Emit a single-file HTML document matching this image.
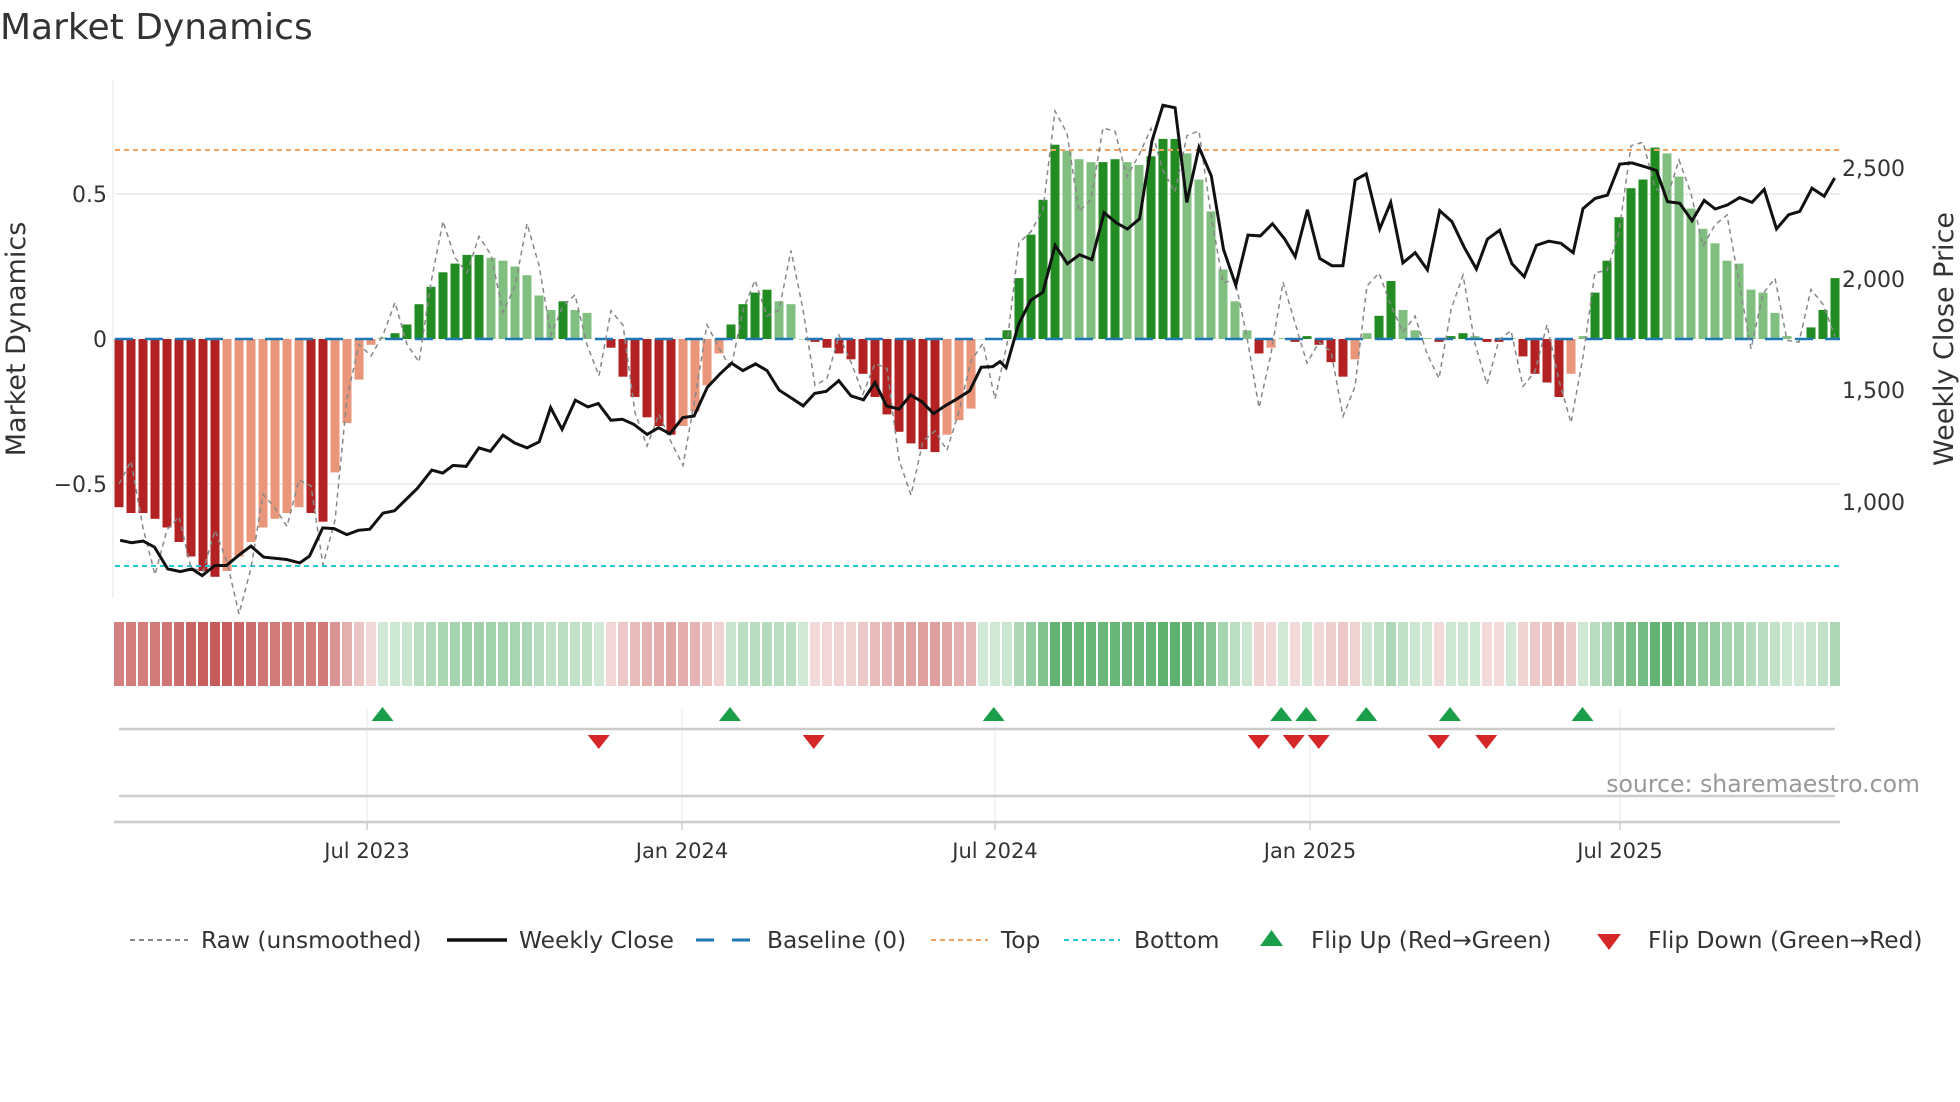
<!DOCTYPE html>
<html><head><meta charset="utf-8"><style>
html,body{margin:0;padding:0;background:#fff;width:1960px;height:1102px;overflow:hidden}
svg{display:block;font-family:"DejaVu Sans","Liberation Sans",sans-serif}
</style></head><body>
<svg id="s" width="1960" height="1102" viewBox="0 0 1960 1102" xmlns="http://www.w3.org/2000/svg">
<text x="0" y="39" font-size="36" fill="#333">Market Dynamics</text>
<line x1="113" y1="81" x2="113" y2="598" stroke="#eee" stroke-width="1.5"/>
<line x1="115" y1="194" x2="1840" y2="194" stroke="#eee" stroke-width="2"/>
<line x1="115" y1="484" x2="1840" y2="484" stroke="#eee" stroke-width="2"/>
<g font-size="22" fill="#333" text-anchor="end">
<text x="107" y="202">0.5</text><text x="107" y="347">0</text><text x="107" y="492">−0.5</text>
</g>
<text transform="translate(25,339) rotate(-90)" font-size="27" fill="#333" text-anchor="middle">Market Dynamics</text>
<g font-size="22" fill="#333">
<text x="1842" y="176">2,500</text><text x="1842" y="287">2,000</text><text x="1842" y="398">1,500</text><text x="1842" y="510">1,000</text>
</g>
<text transform="translate(1953,339) rotate(-90)" font-size="27" fill="#333" text-anchor="middle">Weekly Close Price</text>
<g id="bars"></g>
<line x1="115" y1="150" x2="1840" y2="150" stroke="#f4a460" stroke-width="2" stroke-dasharray="5,4"/>
<line x1="115" y1="566" x2="1840" y2="566" stroke="#22c8d8" stroke-width="2" stroke-dasharray="5,4"/>
<line x1="115" y1="339" x2="1840" y2="339" stroke="#1f77b4" stroke-width="2.5" stroke-dasharray="18,12"/>
<polyline id="raw" fill="none" stroke="#888" stroke-width="1.5" stroke-dasharray="5,4"/>
<polyline id="price" fill="none" stroke="#111" stroke-width="3"/>
<g id="heat"></g>
<g stroke="#eef0f2" stroke-width="1.5">
<line x1="367" y1="708" x2="367" y2="822"/><line x1="682" y1="708" x2="682" y2="822"/><line x1="995" y1="708" x2="995" y2="822"/><line x1="1310" y1="708" x2="1310" y2="822"/><line x1="1620" y1="708" x2="1620" y2="822"/>
</g>
<line x1="119" y1="729" x2="1835" y2="729" stroke="#ccc" stroke-width="2.5"/>
<line x1="119" y1="796" x2="1835" y2="796" stroke="#ccc" stroke-width="2.5"/>
<line x1="114" y1="822" x2="1840" y2="822" stroke="#ccc" stroke-width="2.5"/>
<g stroke="#ccc" stroke-width="1.5">
<line x1="367" y1="822" x2="367" y2="830"/><line x1="682" y1="822" x2="682" y2="830"/><line x1="995" y1="822" x2="995" y2="830"/><line x1="1310" y1="822" x2="1310" y2="830"/><line x1="1620" y1="822" x2="1620" y2="830"/>
</g>
<g id="tri"></g>
<text x="1920" y="792" font-size="23.6" fill="#999" text-anchor="end">source: sharemaestro.com</text>
<g font-size="21" fill="#333" text-anchor="middle">
<text x="367" y="858">Jul 2023</text><text x="682" y="858">Jan 2024</text><text x="995" y="858">Jul 2024</text><text x="1310" y="858">Jan 2025</text><text x="1620" y="858">Jul 2025</text>
</g>
<g font-size="23.3" fill="#333">
<line x1="130" y1="940" x2="188" y2="940" stroke="#888" stroke-width="2" stroke-dasharray="5,4"/>
<text x="201" y="948">Raw (unsmoothed)</text>
<line x1="447" y1="940" x2="507" y2="940" stroke="#111" stroke-width="3.5"/>
<text x="519" y="948">Weekly Close</text>
<line x1="696" y1="940" x2="754" y2="940" stroke="#1f77b4" stroke-width="3" stroke-dasharray="18,18"/>
<text x="767" y="948">Baseline (0)</text>
<line x1="931" y1="940" x2="988" y2="940" stroke="#f4a460" stroke-width="2" stroke-dasharray="5,4"/>
<text x="1001" y="948">Top</text>
<line x1="1064" y1="940" x2="1120" y2="940" stroke="#22c8d8" stroke-width="2" stroke-dasharray="5,4"/>
<text x="1134" y="948">Bottom</text>
<polygon points="1260,946 1283,946 1271.5,930" fill="#1a9e4a"/>
<text x="1311" y="948">Flip Up (Red→Green)</text>
<polygon points="1597,934 1621,934 1609,950" fill="#d62728"/>
<text x="1648" y="948">Flip Down (Green→Red)</text>
</g>
</svg>
<script>
var L=[-0.58,-0.6,-0.6,-0.62,-0.65,-0.7,-0.75,-0.8,-0.82,-0.8,-0.75,-0.7,-0.65,-0.62,-0.6,-0.58,-0.6,-0.63,-0.46,-0.29,-0.14,-0.02,0.005,0.02,0.05,0.12,0.18,0.23,0.26,0.29,0.29,0.28,0.27,0.25,0.22,0.15,0.1,0.13,0.1,0.09,0.0,-0.03,-0.13,-0.2,-0.27,-0.3,-0.33,-0.3,-0.25,-0.16,-0.05,0.05,0.12,0.16,0.17,0.13,0.12,0,-0.01,-0.03,-0.05,-0.07,-0.12,-0.2,-0.26,-0.32,-0.36,-0.38,-0.39,-0.33,-0.28,-0.24,0,0];
var R=[.03,.21,.36,.48,.67,.65,.62,.61,.61,.62,.61,.60,.63,.69,.69,.64,.55,.44,.24,.13,.03,-.05,-.03,0.003,-.01,.01,-.02,-.08,-.13,-.07,.02,.08,.2,.1,.03,0.003,-.01,.01,.02,.01,-.01,-.01,0.003,-.06,-.12,-.15,-.2,-.12,.01,.16,.27,.42,.52,.55,.66,.64,.56,.45,.38,.33,.27,.26,.17,.16,.09,.01,0.003,.04,.10,.21];
var V=L.concat(R),N=V.length,ns="http://www.w3.org/2000/svg";
function X(i){return 119+i*(1835-119)/(N-1);}
function el(t,a,p){var e=document.createElementNS(ns,t);for(var k in a)e.setAttribute(k,a[k]);p.appendChild(e);return e;}
var bars=document.getElementById('bars'),heat=document.getElementById('heat'),raw=[];
for(var i=0;i<N;i++){var v=V[i],p=i?V[i-1]:0,dark=Math.abs(v)>=Math.abs(p)-0.001;
var c=v>=0?(dark?'#228b22':'#80bf80'):(dark?'#b22222':'#e9967a');
var y=339-v*290,h=Math.abs(v*290);
el('rect',{x:X(i)-4.5,y:Math.min(y,339),width:9,height:Math.max(h,0.5),fill:c},bars);
var hc=v>=0?'rgba(70,165,90,'+(0.25+Math.abs(v)*0.9).toFixed(2)+')':'rgba(195,80,80,'+(0.2+Math.abs(v)*0.9).toFixed(2)+')';
el('rect',{x:X(i)-5,y:622,width:10,height:64,fill:hc},heat);
var r=v+0.13*Math.sin(i*1.7)+0.08*Math.cos(i*0.9);
raw.push(X(i).toFixed(1)+','+(339-r*290).toFixed(1));}
document.getElementById('raw').setAttribute('points',raw.join(' '));
var P1=[[35,715],[55,722],[75,717],[95,735],[118,800],[140,808],[160,800],[178,820],[200,790],[220,790],[245,755],[263,732],[285,765],[325,772],[348,782],[365,762],[388,678],[408,680],[430,698],[450,685],[470,682],[493,634],[513,627],[553,560],[578,506],[597,515],[615,492],[638,495],[660,440],[680,450],[702,402],[722,425],[744,440],[765,422],[785,320],[805,385],[828,298],[850,318],[868,308],[890,358],[910,355],[930,370],[953,400],[973,380],[993,398],[1015,350],[1035,345],[1058,260],[1080,220],[1100,188],[1120,210],[1142,190],[1162,210],[1183,268],[1205,292],[1225,315],[1245,278],[1265,272],[1287,240],[1308,285],[1330,297],[1350,245],[1370,315],[1392,325],[1412,282],[1432,303],[1452,338],[1472,315],[1492,295],[1515,270],[1535,200],[1555,198]];
var P2=[[0,690],[10,705],[30,600],[50,540],[70,520],[90,405],[110,450],[130,428],[150,440],[170,325],[190,350],[208,365],[228,340],[248,150],[266,62],[286,68],[305,300],[325,165],[345,235],[365,415],[385,503],[405,380],[425,382],[445,352],[465,390],[482,433],[502,318],[522,437],[542,455],[560,455],[580,245],[598,230],[620,365],[638,300],[658,448],[678,423],[698,465],[718,320],[738,347],[758,410],[778,463],[796,390],[816,368],[836,450],[856,482],[876,405],[896,395],[916,400],[936,423],[952,315],[972,290],[992,282],[1012,206],[1032,203],[1052,212],[1072,222],[1090,298],[1110,302],[1130,345],[1150,295],[1168,316],[1188,306],[1208,288],[1228,300],[1248,268],[1268,365],[1288,330],[1306,322],[1326,265],[1346,285],[1363,240]];
var pts=[];P1.forEach(function(q){pts.push((100+q[0]/1.742).toFixed(1)+','+(300+q[1]/2.975).toFixed(1));});
P2.forEach(function(q){pts.push((1000+q[0]/1.633).toFixed(1)+','+(80+q[1]/2.45).toFixed(1));});
document.getElementById('price').setAttribute('points',pts.join(' '));
var tri=document.getElementById('tri');
[306,584,795,1025,1045,1093,1160,1266].forEach(function(x){x*=1.25;el('polygon',{points:(x-11)+',721 '+(x+11)+',721 '+x+',707',fill:'#1a9e4a'},tri);});
[479,651,1007,1035,1055,1151,1189].forEach(function(x){x*=1.25;el('polygon',{points:(x-11)+',735 '+(x+11)+',735 '+x+',749',fill:'#d62728'},tri);});
</script>
</body></html>
